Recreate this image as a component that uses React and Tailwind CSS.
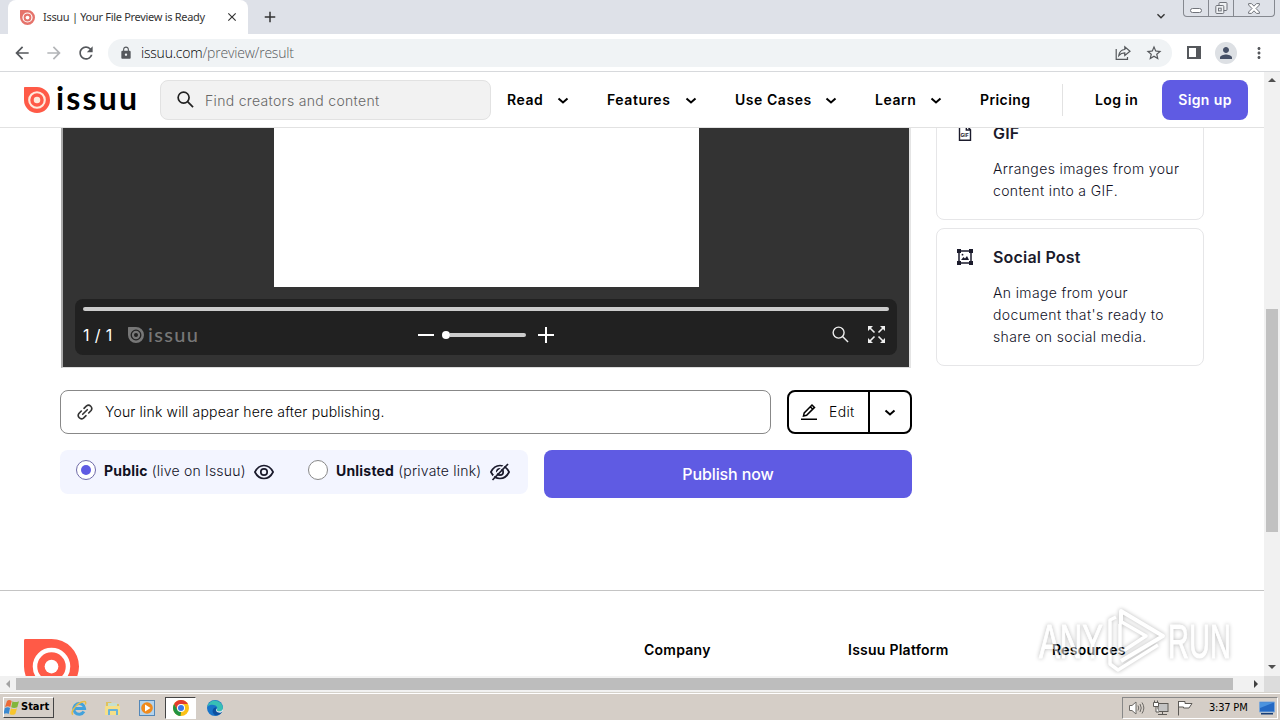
import React from 'react';
import {
  MdAdd,
  MdArrowBack,
  MdArrowForward,
  MdClose,
  MdExpandMore,
  MdLock,
  MdMoreVert,
  MdPerson,
  MdRefresh,
  MdStarBorder
} from 'react-icons/md';

const navItems = [
  { label: 'Read', width: 'w-[68px]' },
  { label: 'Features', width: 'w-24' },
  { label: 'Use Cases', width: 'w-[108px]' },
  { label: 'Learn', width: 'w-[73px]' }
];

const footerColumns = ['Company', 'Issuu Platform', 'Resources'];

const IssuuMark = ({ className, color = '#ff5a47', ring = '#fff' }) => (
  <svg className={className} viewBox="0 0 56 56" fill="none">
    <path d="M1.5 0H28A28 28 0 1 1 0 28V1.5A1.5 1.5 0 0 1 1.5 0Z" fill={color} />
    <circle cx="28" cy="28" r="16.8" stroke={ring} strokeWidth="4.6" />
    <circle cx="28" cy="28" r="7" fill={ring} />
  </svg>
);

const Chevron = ({ className }) => (
  <svg className={className} viewBox="0 0 24 24" fill="none" stroke="currentColor" strokeWidth="2">
    <path d="M7.5 10.5L12 14.5L16.5 10.5" />
  </svg>
);

const SearchIcon = ({ className, strokeWidth = 1.8 }) => (
  <svg className={className} viewBox="0 0 18 18" fill="none" stroke="currentColor" strokeWidth={strokeWidth}>
    <circle cx="7" cy="7" r="5.8" />
    <path d="M11.2 11.2L17 17" />
  </svg>
);

const TabStrip = () => (
  <div className="flex h-[34px] shrink-0 bg-[#dee1e8] pl-2">
    <div className="flex w-60 items-center rounded-t-lg bg-white pl-3">
      <IssuuMark className="h-[15px] w-[15px]" color="#e5736b" />
      <span className="ml-2 w-[172px] whitespace-nowrap font-['Noto_Sans',sans-serif] text-[11px] tracking-[-0.3px] text-[#333]">
        Issuu | Your File Preview is Ready
      </span>
      <MdClose className="ml-2.5 h-[14px] w-[14px] text-[#333]" />
    </div>
    <MdAdd className="ml-[13px] mt-2 h-[18px] w-[18px] text-[#333]" />
    <div className="ml-auto flex">
      <MdExpandMore className="mr-3.5 mt-2 h-4 w-4 text-[#333]" />
      <div className="mr-[5px] flex h-[17px] w-[92px] rounded-b border border-t-0 border-[#85888f] text-[#70737a]">
        <div className="flex w-[25px] items-center justify-center border-r border-[#85888f]">
          <div className="mt-1 h-[5px] w-3 rounded-sm border border-[#70737a] bg-white"></div>
        </div>
        <div className="flex w-[25px] items-center justify-center border-r border-[#85888f]">
          <svg className="h-[13px] w-[13px]" viewBox="0 0 13 13" fill="#eef0f3" stroke="currentColor">
            <rect x="4" y=".5" width="8" height="8" rx="1" />
            <rect x=".8" y="3.5" width="8" height="8" rx="1" />
            <rect x="3.5" y="6.2" width="2.7" height="2.7" />
          </svg>
        </div>
        <div className="flex flex-1 items-center justify-center">
          <svg className="h-[11px] w-3" viewBox="0 0 12 11" fill="#fff" stroke="currentColor">
            <path d="M.6.6H3.5L6 3.2L8.5.6H11.4V2L8 5.5L11.4 9V10.4H8.5L6 7.8L3.5 10.4H.6V9L4 5.5L.6 2Z" />
          </svg>
        </div>
      </div>
    </div>
  </div>
);

const Toolbar = () => (
  <div className="flex h-[38px] shrink-0 items-center border-b border-[#d7d9dc] bg-white pl-3 pr-3 text-[#55585c]">
    <MdArrowBack className="h-5 w-5" />
    <MdArrowForward className="ml-3 h-5 w-5 text-[#b3b5b8]" />
    <MdRefresh className="ml-3 h-5 w-5" />
    <div className="ml-3 flex h-7 w-[1064px] items-center rounded-full bg-[#f0f3f5] pl-[11px] pr-[9px]">
      <MdLock className="h-[14px] w-[14px]" />
      <span className="ml-2 font-['Open_Sans',sans-serif] text-[14px] font-light tracking-[-0.2px] text-[#55585c]">
        <span className="text-black">issuu.com</span>/preview/result
      </span>
      <svg className="ml-auto h-4 w-4" viewBox="0 0 16 16" fill="none" stroke="currentColor" strokeWidth="1.2">
        <path d="M1.2 4V14.4H12.5V12" />
        <path d="M3.8 10.5C4.3 7 6.5 4.8 9.8 4.5V1.8L15 6.2L9.8 10.4V7.8C7.6 7.8 5.5 8.5 3.8 10.5Z" />
      </svg>
      <MdStarBorder className="ml-3.5 h-[18px] w-[18px]" />
    </div>
    <div className="ml-[15px] h-[13px] w-[14px] border-2 border-r-[5px] border-[#55585c]"></div>
    <div className="ml-[14px] flex h-[22px] w-[22px] items-center justify-center rounded-full bg-[#dde0e4]">
      <MdPerson className="h-[18px] w-[18px] text-[#465066]" />
    </div>
    <MdMoreVert className="ml-[13px] h-[18px] w-[18px] shrink-0" />
  </div>
);

const Header = () => (
  <header className="flex h-14 shrink-0 items-center border-b border-[#e2e2e2] bg-white pl-6 pr-4 text-black">
    <IssuuMark className="h-[26px] w-[26px]" ring="#ffeadb" />
    <span className="-mt-[4px] ml-[6px] w-[80px] font-['Lato',sans-serif] text-[32px] font-bold leading-none tracking-[2.2px]">issuu</span>
    <div className="ml-6 flex h-10 w-[331px] items-center rounded-lg border border-[#e2e2e2] bg-[#f2f2f2] pl-4">
      <SearchIcon className="h-[17px] w-[17px] text-[#222]" />
      <span className="ml-[11px] mt-px text-[14px] font-light tracking-[0.32px] text-[#666]">Find creators and content</span>
    </div>
    <nav className="ml-4 flex gap-8 text-[14px] font-semibold tracking-[0.55px]">
      {navItems.map((item) => (
        <div key={item.label} className={`flex items-center justify-between whitespace-nowrap ${item.width}`}>
          {item.label}
          <Chevron className="mt-px h-6 w-6 shrink-0" />
        </div>
      ))}
    </nav>
    <span className="ml-8 w-[51px] text-[14px] font-semibold tracking-[0.4px]">Pricing</span>
    <div className="ml-[31px] h-8 w-px bg-[#e2e2e2]"></div>
    <span className="ml-8 w-[51px] whitespace-nowrap text-[14px] font-semibold tracking-[0.35px]">Log in</span>
    <div className="ml-4 flex h-10 w-[86px] items-center justify-center rounded-lg bg-[#5f5be3] text-[14px] font-semibold tracking-[0.4px] text-white">
      Sign up
    </div>
  </header>
);

const Viewer = () => (
  <div className="ml-px flex h-[240px] w-[850px] flex-col border-b border-l-2 border-r-2 border-b-[#ddd] border-l-[#aaa] border-r-[#e4e4e4] bg-[#333]">
    <div className="ml-[210.5px] h-[159px] w-[425px] bg-white"></div>
    <div className="ml-[12px] mt-3 h-14 w-[822px] rounded-lg bg-[#212121] px-2 pt-2 text-white">
      <div className="h-1 rounded-full bg-[#ccc]"></div>
      <div className="mt-3 flex h-6 items-center">
        <span className="w-[45px] text-[16px] tracking-[0.4px]">1 / 1</span>
        <IssuuMark className="h-4 w-4" color="#777" ring="#212121" />
        <span className="-mt-[3px] ml-1 w-[50px] font-['Lato',sans-serif] text-[20px] font-medium leading-none tracking-[1.3px] text-[#777]">issuu</span>
        <div className="ml-[220px] h-0.5 w-4 bg-white"></div>
        <div className="ml-2 h-2 w-2 rounded-full bg-white"></div>
        <div className="h-1 w-[76px] rounded-r-full bg-[#ccc]"></div>
        <svg className="ml-3 h-4 w-4" viewBox="0 0 16 16" stroke="#fff" strokeWidth="2">
          <path d="M8 0V16M0 8H16" />
        </svg>
        <SearchIcon className="-mt-px ml-[278px] h-[17px] w-[17px] text-[#eee]" strokeWidth={1.5} />
        <svg className="-mt-px ml-[19px] h-[17px] w-[17px]" viewBox="0 0 17 17" fill="#eee" stroke="#eee" strokeWidth="1.6">
          <path d="M2 2L6.5 6.5M15 2L10.5 6.5M2 15L6.5 10.5M15 15L10.5 10.5" />
          <path stroke="none" d="M0 0H5L0 5ZM17 0H12L17 5ZM0 17V12L5 17ZM17 17V12L12 17Z" />
        </svg>
      </div>
    </div>
  </div>
);

const Eye = ({ off }) => (
  <svg className="h-5 w-5" viewBox="0 0 20 20" fill="none" stroke="#1b1b2c" strokeWidth="1.7">
    <path d="M.9 10C3 5.8 6 3.5 10 3.5S17 5.8 19.1 10C17 14.2 14 16.5 10 16.5S3 14.2 .9 10Z" />
    <circle cx="10" cy="10" r="3.2" />
    {off && <path stroke="#f3f5ff" strokeWidth="1.6" d="M1.2 16.5L16.5 1.2" />}
    {off && <path d="M2.5 18L18 2" />}
  </svg>
);

const PublishPanel = () => (
  <>
    <div className="mt-[22px] flex gap-4 text-[14px]">
      <div className="flex h-11 w-[711px] items-center rounded-lg border border-[#888] pl-4 text-[#1b1b2c]">
        <svg className="h-4 w-4" viewBox="0 0 16 16" fill="none" stroke="#333" strokeWidth="1.6" strokeLinecap="round">
          <path d="M5.7 10.3L10.3 5.7" />
          <path d="M7 4.3L9.5 1.9A3.3 3.3 0 0 1 14.1 6.5L11.7 9" />
          <path d="M9 11.7L6.5 14.1A3.3 3.3 0 0 1 1.9 9.5L4.3 7" />
        </svg>
        <span className="-mt-px ml-3 font-light tracking-[0.17px] text-black">Your link will appear here after publishing.</span>
      </div>
      <div className="flex h-11 w-[125px] rounded-lg border-2 border-black text-black">
        <div className="flex w-[81px] items-center border-r-2 border-black pl-[11px]">
          <svg className="h-[18px] w-[18px]" viewBox="0 0 18 18" fill="none" stroke="currentColor" strokeWidth="1.5">
            <path d="M1 16.3H17M3.5 13L4.2 9.9L12 2L14.5 4.4L6.6 12.3ZM10.3 3.8L12.8 6.2" />
          </svg>
          <span className="-mt-px ml-[11px] font-light tracking-[0.35px]">Edit</span>
        </div>
        <div className="flex flex-1 items-center justify-center">
          <Chevron className="h-6 w-6" />
        </div>
      </div>
    </div>
    <div className="mt-4 flex gap-4">
      <div className="flex h-11 w-[468px] items-center rounded-lg bg-[#f3f5ff] pb-1 pl-4 text-[14px] font-light tracking-[0.2px] text-[#11111f]">
        <div className="flex h-5 w-5 items-center justify-center rounded-full border border-[#6f6aa8] bg-white">
          <div className="h-[10px] w-[10px] rounded-full bg-[#5f5be3]"></div>
        </div>
        <span className="ml-2 mt-px w-[142px] whitespace-nowrap"><b className="font-bold">Public</b> (live on Issuu)</span>
        <div className="ml-2 mt-1"><Eye /></div>
        <div className="ml-[34px] h-5 w-5 rounded-full border border-[#888] bg-white"></div>
        <span className="ml-2 mt-px w-[146px] whitespace-nowrap"><b className="font-bold">Unlisted</b> (private link)</span>
        <div className="ml-2 mt-1"><Eye off /></div>
      </div>
      <div className="flex h-12 w-[368px] items-center justify-center rounded-lg bg-[#5f5be3] text-[16px] font-medium tracking-[-0.1px] text-white">
        Publish now
      </div>
    </div>
  </>
);

const FormatCard = ({ icon, title, children }) => (
  <div className="flex rounded-lg border border-[#e6e6e8] pb-[17px] pl-5 pt-4 text-[#1b1b2c]">
    <div className="mt-1 h-4 w-4">{icon}</div>
    <div className="ml-5">
      <h3 className="text-[16px] font-semibold leading-6 tracking-[0.2px]">{title}</h3>
      <p className="mt-[13px] whitespace-nowrap text-[14px] font-light leading-[22px] tracking-[0.36px] text-[#11111f]">{children}</p>
    </div>
  </div>
);

const Sidebar = () => (
  <div className="-mt-6 ml-6 flex w-[268px] flex-col gap-2">
    <FormatCard
      title="GIF"
      icon={
        <svg className="h-4 w-4" viewBox="0 0 16 16" fill="none" stroke="currentColor" strokeWidth="1.4">
          <path d="M2.5 .7H9.5L13.5 4.7V15.3H2.5ZM9.3 .7V5H13.5" />
          <text x="3.6" y="11.6" fill="currentColor" stroke="none" fontSize="5" fontWeight="700" fontFamily="Inter, sans-serif">GIF</text>
        </svg>
      }
    >
      Arranges images from your<br />content into a GIF.
    </FormatCard>
    <FormatCard
      title="Social Post"
      icon={
        <svg className="h-4 w-4" viewBox="0 0 16 16" fill="currentColor">
          <path d="M2 2H14V14H2Z" fill="none" stroke="currentColor" strokeWidth="1.5" />
          <path d="M0 0H4V4H0ZM12 0H16V4H12ZM0 12H4V16H0ZM12 12H16V16H12Z" />
          <path d="M4 11L6.5 8L8 9.5L10 7L12 11Z" />
          <circle cx="5.5" cy="5.7" r=".9" />
        </svg>
      }
    >
      An image from your<br />document that's ready to<br />share on social media.
    </FormatCard>
  </div>
);

const Footer = () => (
  <footer className="mt-[92px] flex border-t border-[#c4c4c4] pl-6 pt-12">
    <IssuuMark className="h-[55px] w-[55px]" />
    <div className="ml-[565px] flex text-[14px] font-semibold text-black">
      {footerColumns.map((title) => (
        <span key={title} className="w-[204px] tracking-[0.25px]">{title}</span>
      ))}
    </div>
  </footer>
);

const VerticalScrollbar = () => (
  <div className="flex w-4 shrink-0 flex-col items-center bg-[#f1f1f1]">
    <svg className="mt-[6px] h-1 w-2" viewBox="0 0 8 4" fill="#505050"><path d="M4 0L8 4H0Z" /></svg>
    <div className="mt-[227px] h-[223px] w-3 bg-[#c1c1c1]"></div>
    <svg className="mb-[7px] mt-auto h-1 w-2" viewBox="0 0 8 4" fill="#505050"><path d="M0 0H8L4 4Z" /></svg>
  </div>
);

const HorizontalScrollbar = () => (
  <div className="flex h-4 shrink-0 items-center bg-[#f1f1f1]">
    <svg className="ml-[6px] h-2 w-1" viewBox="0 0 4 8" fill="#a3a3a3"><path d="M4 0V8L0 4Z" /></svg>
    <div className="ml-[6px] h-3 w-[1217px] bg-[#bdbdbd]"></div>
    <svg className="ml-[21px] h-2 w-1" viewBox="0 0 4 8" fill="#404040"><path d="M0 0L4 4L0 8Z" /></svg>
    <div className="ml-auto h-4 w-4 bg-[#dcdcdc]"></div>
  </div>
);

const Watermark = () => (
  <svg
    className="pointer-events-none absolute left-[1034px] top-[604px] h-[72px] w-[204px] opacity-50 drop-shadow-[0_0_2px_rgba(0,0,0,0.55)]"
    viewBox="0 0 204 72"
    fill="#fff"
    stroke="#fff"
    strokeLinejoin="round"
    fontFamily="'Liberation Sans Narrow', 'Liberation Sans', sans-serif"
    fontSize="48"
  >
    <text x="5" y="54" textLength="64" lengthAdjust="spacingAndGlyphs" strokeWidth="1">ANY</text>
    <text x="134" y="54" textLength="63" lengthAdjust="spacingAndGlyphs" strokeWidth="1">RUN</text>
    <path d="M87 20V7L129 32L87 57" fill="none" strokeWidth="4" />
    <path d="M82 13L76 16V60L84 66L124 41M86 20V49L112 32L86 17" fill="none" strokeWidth="3.5" />
  </svg>
);

const Taskbar = () => (
  <div className="flex h-7 shrink-0 items-center border-t border-[#d5d2cb] bg-[#d5cec7] pl-[3px] shadow-[inset_0_1px_0_#fff]">
    <div className="mt-0.5 flex h-[21px] w-[51px] items-center border border-b-[#444] border-l-white border-r-[#444] border-t-white">
      <svg className="h-[15px] w-[15px]" viewBox="0 0 15 15">
        <path d="M3 1Q5 -1 7.7 1L6.3 7Q4 5.5 1 7Z" fill="#ed6a36" />
        <path d="M8.5 1.2Q11 3 15 1.2L13.3 7.2Q10 8.7 7.2 7.2Z" fill="#82b63c" />
        <path d="M.9 8Q4 6.5 6 8L4.7 14Q2.5 12.5 -.6 14Z" fill="#3b89d0" />
        <path d="M7 8.2Q10 10 13 8.2L11.3 14Q8.3 15.7 5.6 14Z" fill="#f7c52d" />
      </svg>
      <span className="ml-0.5 font-['DejaVu_Sans_Condensed','DejaVu_Sans',sans-serif] text-[11px] font-bold tracking-[0px] text-black">Start</span>
    </div>
    <svg className="ml-[17px] mt-0.5 h-4 w-4" viewBox="0 0 16 16" fill="none">
      <path d="M12.9 11.5A5.4 5.4 0 1 1 13.6 8.5H3.5" stroke="#43a2dc" strokeWidth="3" />
      <path d="M2 14.5C-1 13 4 5 10 2.3C14 .5 15.5 1.5 14.3 4.5" stroke="#e6bd48" strokeWidth="1.5" />
    </svg>
    <svg className="ml-[18px] mt-0.5 h-4 w-4" viewBox="0 0 16 16">
      <path d="M1 2H6L7.5 4H14V14H1Z" fill="#dfc25e" />
      <path d="M3 3H12V6H3Z" fill="#c4dfcf" />
      <path d="M0 6H15V15H0Z" fill="#f5df88" />
      <path d="M3 15V10Q3 9 4 9H12Q13 9 13 10V15H11V11H5V15Z" fill="#67b3da" />
    </svg>
    <svg className="ml-[18px] mt-0.5 h-4 w-4" viewBox="0 0 16 16">
      <rect x=".5" y=".5" width="15" height="15" fill="#b4d3ec" stroke="#5387b8" />
      <circle cx="8" cy="8" r="5.8" fill="#f08a1c" />
      <path d="M6 4.5L11.5 8L6 11.5Z" fill="#fff" />
    </svg>
    <div className="ml-[10px] mt-0.5 flex h-[22px] w-[31px] items-center justify-center border border-b-white border-l-[#444] border-r-white border-t-[#444] bg-white">
      <svg className="h-4 w-4" viewBox="0 0 16 16">
        <circle cx="8" cy="8" r="8" fill="#fbc116" />
        <path d="M8 8L4.5 10L1.1 4A8 8 0 0 1 14.9 4H8Z" fill="#e33b2e" />
        <path d="M1.1 4L4.5 10L8 12L7.5 16A8 8 0 0 1 1.1 4Z" fill="#229342" />
        <circle cx="8" cy="8" r="4" fill="#fff" />
        <circle cx="8" cy="8" r="3" fill="#3b78e7" />
      </svg>
    </div>
    <svg className="ml-[11px] mt-0.5 h-4 w-4" viewBox="0 0 16 16">
      <circle cx="8" cy="8" r="8" fill="#1874c9" />
      <path d="M.3 6.5A8 8 0 0 1 16 8C16 11 13 12 10.5 11C9 10.3 10.5 9.5 10.3 8C9.8 5 4 3.5 .3 6.5Z" fill="#37bfb5" />
      <path d="M10.2 7C8.5 7.5 8 10.5 11 12C13 13 14.5 12.3 15.3 11.3C14.5 13.5 12 15.5 9 15.5C4.5 14 4 7.5 10.2 7Z" fill="#0c4f9f" />
      <path d="M10.5 8.3C10.3 9.5 9 10.3 10.5 11C12 11.8 15.5 11.3 16 8.5V11L13.5 12.7C9.5 13 7.5 10 10.5 8.3Z" fill="#e3ecea" />
    </svg>
    <div className="ml-auto mr-[2px] mt-0.5 flex h-[22px] w-[156px] items-center border border-b-white border-l-[#888] border-r-white border-t-[#888] pl-[6px]">
      <svg className="h-4 w-4" viewBox="0 0 16 16" fill="#fff" stroke="#6d6a66">
        <path d="M.5 5.5H3L7 2V14L3 10.5H.5Z" />
        <path fill="none" d="M9 5.5Q10.5 8 9 10.5M11 4Q13.5 8 11 12M13 2.5Q16.7 8 13 13.5" />
      </svg>
      <svg className="ml-2 h-4 w-4" viewBox="0 0 16 16" fill="#fff" stroke="#5d5a56">
        <rect x="5" y="3.5" width="10" height="8" fill="#c3c3c3" />
        <path d="M.5 2.5H5.5V6.5H.5ZM3 6.5V12H6M1.5 .5V2.5M4.5 .5V2.5M5 14.5H14M9.5 11.5V14.5" />
      </svg>
      <svg className="ml-2 h-4 w-4" viewBox="0 0 16 16" fill="#fff" stroke="#5d5a56">
        <path d="M1.5 1V15.5M1.5 1.5H8V3.5H15L12 8H6.5V7H1.5" />
      </svg>
      <span className="ml-[16px] mt-px whitespace-nowrap font-['DejaVu_Sans_Condensed','DejaVu_Sans',sans-serif] text-[11px] tracking-[-0.2px] text-black">3:37 PM</span>
      <svg className="ml-auto mr-[2px] h-[14px] w-4" viewBox="0 0 16 14">
        <path d="M.5 1H15.5V11H.5Z" fill="#2469c4" stroke="#7ca7d8" />
        <path d="M1 1.5H15L1 7Z" fill="#4b93df" />
        <path d="M2 12H14V13.5H2Z" fill="#173d75" />
      </svg>
    </div>
  </div>
);

const App = () => (
  <div className="relative flex h-[720px] w-[1280px] flex-col overflow-hidden bg-white font-['Inter',sans-serif]">
    <TabStrip />
    <Toolbar />
    <div className="flex h-[604px] shrink-0">
      <div className="flex w-[1264px] flex-col overflow-hidden">
        <Header />
        <main className="flex-1 overflow-hidden">
          <div className="flex h-[370px] pl-[60px]">
            <div className="w-[852px]">
              <Viewer />
              <PublishPanel />
            </div>
            <Sidebar />
          </div>
          <Footer />
        </main>
      </div>
      <VerticalScrollbar />
    </div>
    <HorizontalScrollbar />
    <Taskbar />
    <Watermark />
  </div>
);

export default App;
